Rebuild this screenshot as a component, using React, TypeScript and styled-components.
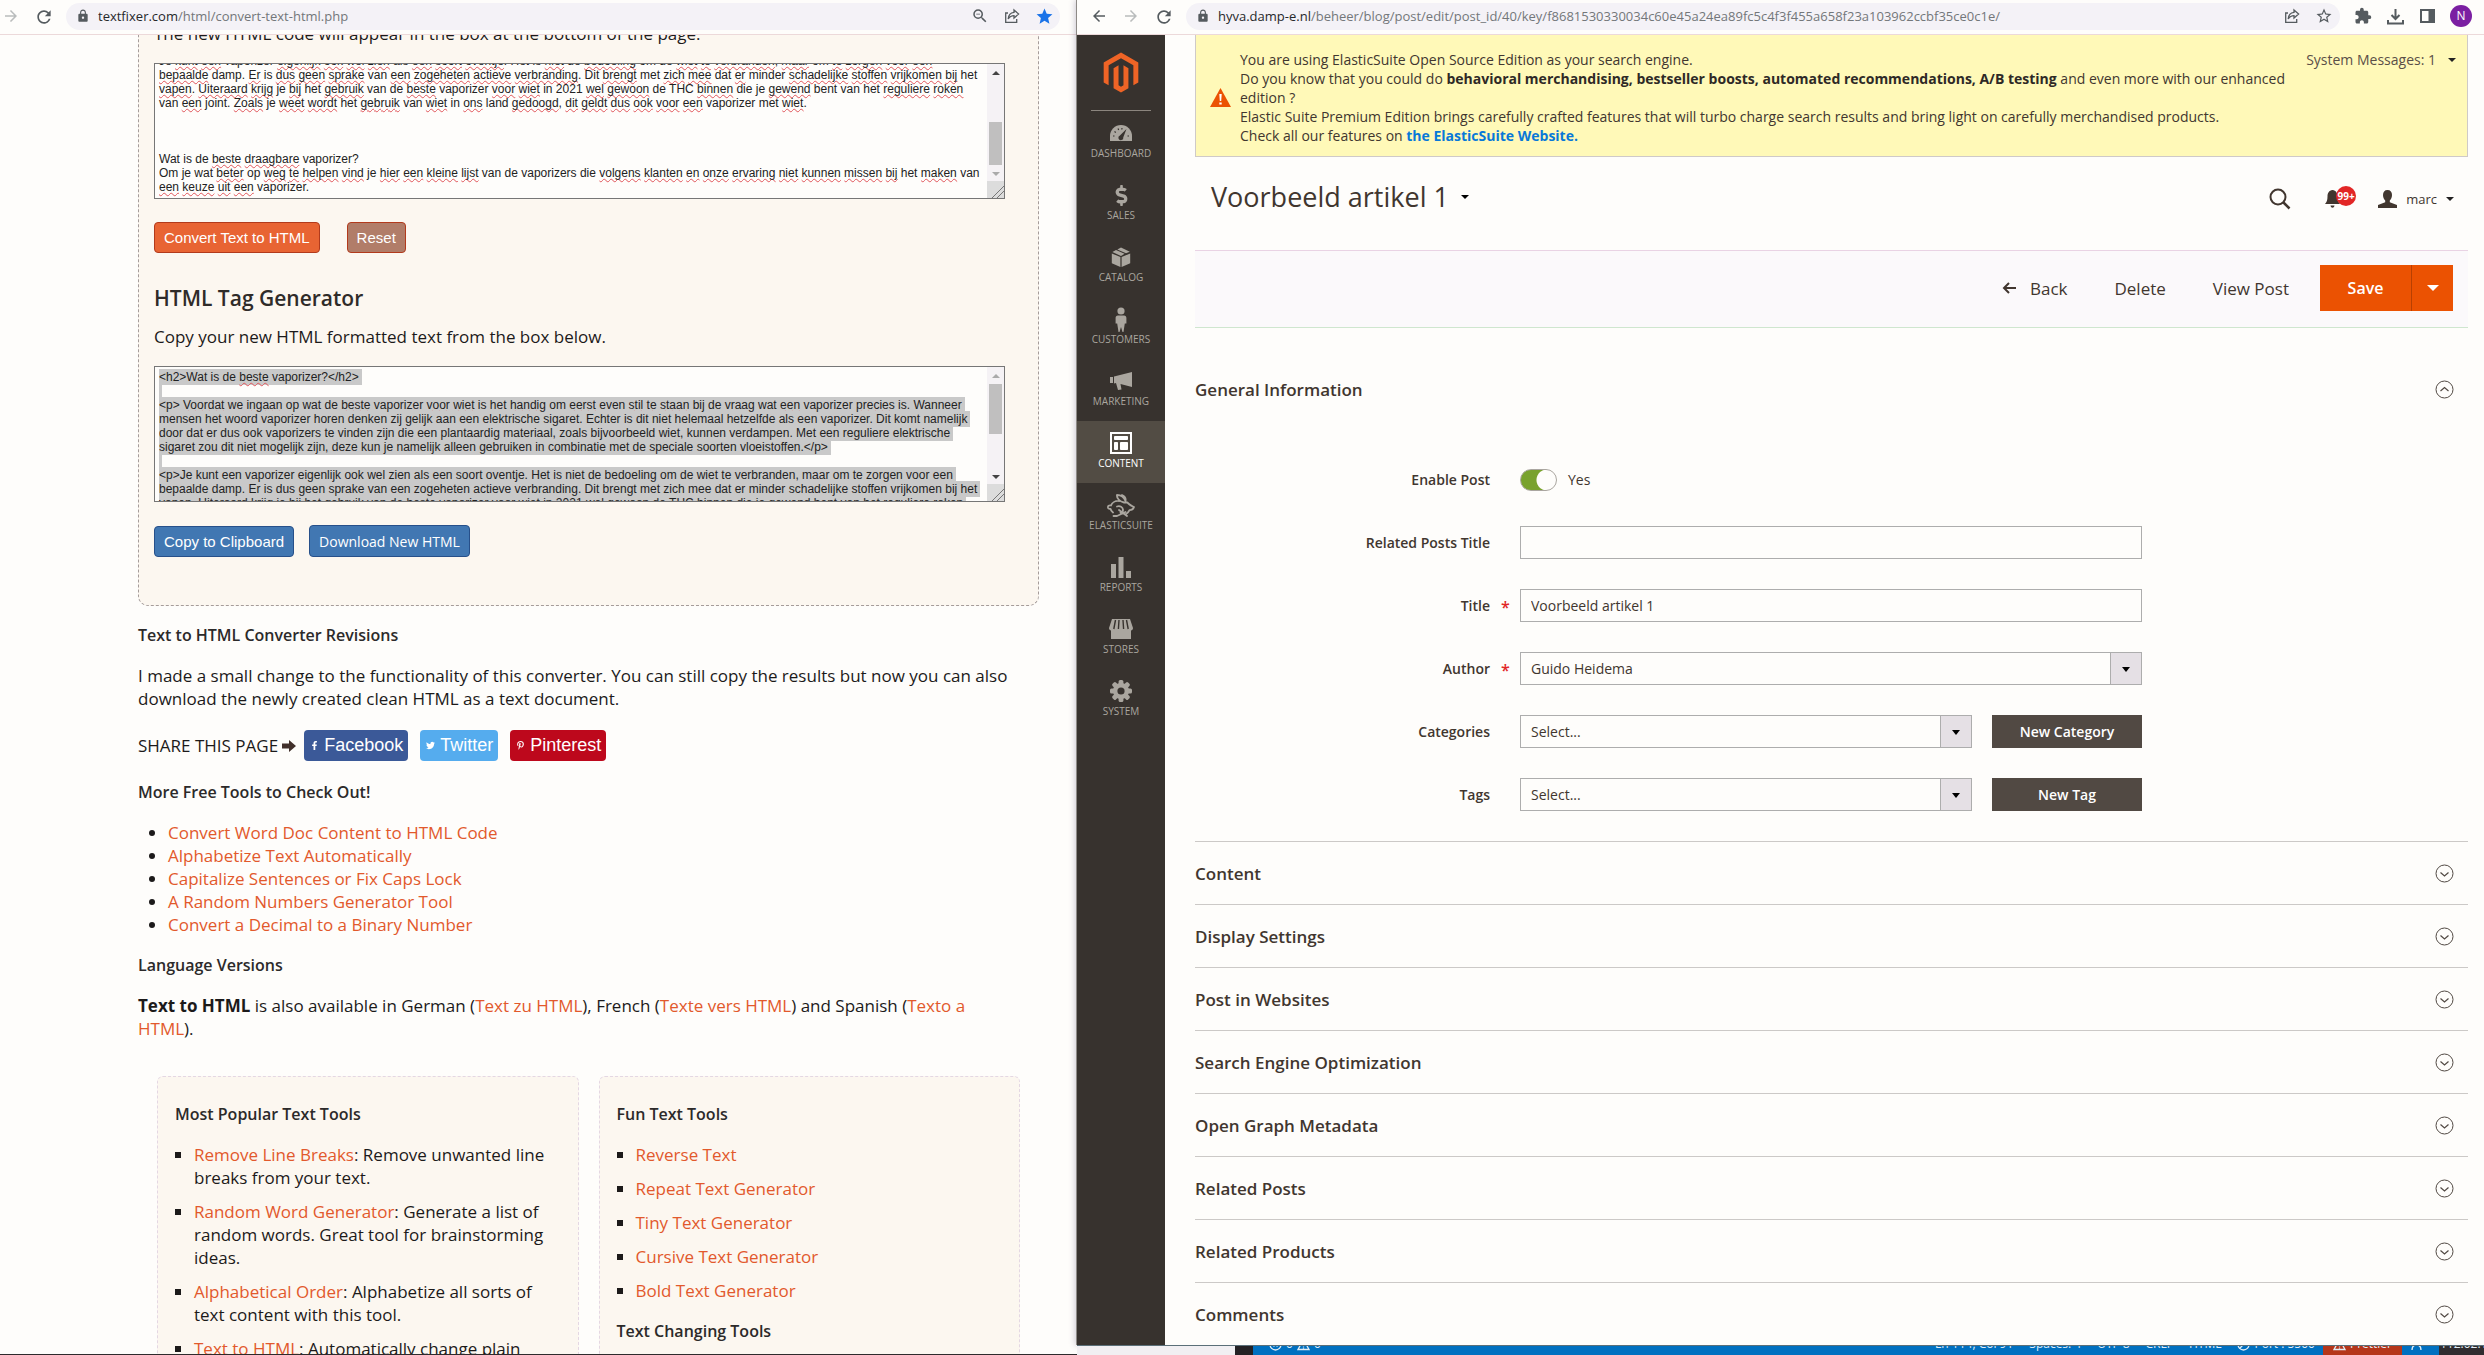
import React, { useLayoutEffect, useRef } from 'react';
import styled, { createGlobalStyle, css } from 'styled-components';
import {
  MdArrowBack, MdArrowForward, MdRefresh, MdLock, MdZoomOut, MdStar, MdStarBorder, MdExtension,
} from 'react-icons/md';
import { FaFacebookF, FaTwitter, FaPinterestP, FaDollarSign } from 'react-icons/fa';
import { Rabbit } from 'lucide-react';

const sans = `'Open Sans', 'Noto Sans', sans-serif`;
const arial = `'Liberation Sans', Arial, sans-serif`;
const paper = '#fefdfb';

const Global = createGlobalStyle`
  *, *::before, *::after { box-sizing: border-box; }
  body { margin: 0; background: ${paper}; font-family: ${sans}; color: #41362f; }
  h1, h2, h3, p, ul { margin: 0; padding: 0; font-weight: 400; }
  button, input, select, textarea { font-family: inherit; margin: 0; border-radius: 0; }
  button { cursor: pointer; }
  svg { display: block; flex: none; }
`;

/* ---------- desktop ---------- */
const Desktop = styled.div`
  display: grid;
  grid-template-columns: 1077fr 1407fr;
  height: 100vh;
  overflow: hidden;
`;
const Window = styled.section`
  display: flex;
  flex-direction: column;
  min-width: 0;
  min-height: 0;
  background: ${paper};
`;
const LeftWindow = styled(Window)`
  border-bottom: 1px solid #2e2a2c;
`;
const RightSide = styled.div`
  display: flex;
  flex-direction: column;
  min-width: 0;
  min-height: 0;
  z-index: 1;
`;
const RightWindow = styled(Window)`
  flex: 1;
  box-shadow: -1px 0 0 #8d8a86, -2px 0 6px rgba(90, 80, 120, 0.3);
`;

/* ---------- browser toolbar ---------- */
const Toolbar = styled.div<{ $start: number; $end: number }>`
  display: flex;
  align-items: center;
  gap: 14px;
  height: 35px;
  flex: none;
  padding: 0 ${p => p.$end}px 2px ${p => p.$start}px;
  border-bottom: 1px solid #ecd9da;
  color: #5c6468;
`;
const IconButton = styled.button<{ $dim?: boolean }>`
  display: grid;
  place-items: center;
  width: 18px;
  height: 18px;
  padding: 0;
  border: 0;
  background: none;
  color: ${p => (p.$dim ? '#b9bcbc' : '#555b5f')};
`;
const Omnibox = styled.div`
  display: flex;
  align-items: center;
  gap: 14px;
  flex: 1;
  min-width: 0;
  height: 27px;
  padding: 0 7px 0 10px;
  border-radius: 14px;
  background: #f4f2f7;
  color: #555b5f;
`;
const Address = styled.div`
  flex: 1;
  margin-left: -6px;
  min-width: 0;
  overflow: hidden;
  white-space: nowrap;
  font-size: 13px;
  line-height: 20px;
  color: #73777a;
  b { font-weight: 400; color: #26282a; }
`;
const Avatar = styled.button`
  width: 22px;
  height: 22px;
  padding: 0;
  border: 0;
  border-radius: 50%;
  background: #7b1fa2;
  color: #fff;
  font-size: 12px;
  line-height: 22px;
`;

/* ---------- text fixer page ---------- */
const Viewport = styled.main`
  flex: 1;
  min-height: 0;
  overflow: hidden;
  padding: 0 38px 0 138px;
  color: #1c1a1a;
  font-size: 17px;
  line-height: 23px;
`;
const ToolBox = styled.div`
  margin-top: -13px;
  padding: 0 33px 48px 15px;
  background: #fcf7f0;
  border: 1px dashed #a59c9a;
  border-top: 0;
  border-radius: 0 0 10px 10px;
`;
const Lead = styled.p`
  line-height: 24px;
`;
const Prose = styled.p`
  padding-right: 20px;
`;
const ToolHeading = styled.h2`
  font-size: 21px;
  line-height: 30px;
  font-weight: 600;
  color: #2f2b29;
  margin: 30px 0 12px;
`;
const Area = styled.div`
  position: relative;
  height: 136px;
  margin: 17px 0 23px;
  border: 1px solid #767676;
  background: ${paper};
  overflow: hidden;
`;
const areaText = css`
  width: 100%;
  height: 100%;
  margin: 0;
  padding: 3px 2px 12px 4px;
  border: 0;
  font-family: ${arial};
  font-size: 12px;
  line-height: 14px;
  white-space: pre;
  overflow: hidden;
`;
const Marks = styled.div`
  ${areaText}
  position: absolute;
  inset: 0;
  color: transparent;
`;
const TextInput = styled.textarea`
  ${areaText}
  position: relative;
  display: block;
  resize: none;
  background: transparent;
  color: #222;
  outline: none;
`;
const Typo = styled.span`
  text-decoration: underline wavy #e0555a;
  text-decoration-thickness: 1px;
  text-decoration-skip-ink: none;
`;
const Selected = styled.span`
  background: #c9c9c9;
  padding: 1px 3px 1px 0;
  line-height: 14px;
`;
const Rail = styled.div`
  position: absolute;
  top: 0;
  right: 0;
  bottom: 0;
  width: 17px;
  display: flex;
  flex-direction: column;
  align-items: center;
  background: #f5f2f5;
`;
const Thumb = styled.div<{ $at: number; $size: number }>`
  width: 13px;
  height: ${p => p.$size}px;
  margin-top: ${p => p.$at}px;
  background: #c0bfbf;
`;
const Tri = styled.i<{ $up?: boolean; $size?: number; $color?: string }>`
  flex: none;
  width: 0;
  height: 0;
  border: ${p => p.$size ?? 4}px solid transparent;
  ${p => (p.$up
    ? css`border-top: 0; border-bottom-color: ${p.$color ?? '#222'};`
    : css`border-bottom: 0; border-top-color: ${p.$color ?? '#222'};`)}
`;
const RailTop = styled.div` height: 17px; display: grid; place-items: center; `;
const RailEnd = styled.div`
  margin-top: auto;
  width: 17px;
  display: grid;
  justify-items: center;
`;
const Grip = styled.div`
  width: 17px;
  height: 17px;
  margin-top: 5px;
  background: linear-gradient(135deg, #dcdcdc 0 62%, #777 62% 66%, #dcdcdc 66% 78%, #777 78% 82%, #dcdcdc 82%);
`;
const ButtonRow = styled.div<{ $gap: number }>`
  display: flex;
  align-items: center;
  gap: ${p => p.$gap}px;
`;
const ToolButton = styled.button<{ $tone: 'orange' | 'brown' | 'blue'; $strong?: boolean }>`
  height: ${p => (p.$strong ? 32 : 31)}px;
  padding: 0 9px;
  border: 1px solid ${p => (p.$tone === 'blue' ? '#27508a' : '#b23a1c')};
  border-radius: 4px;
  background: ${p => ({ orange: '#e86433', brown: '#b17d69', blue: '#4177b2' })[p.$tone]};
  color: #fff;
  font-family: ${p => (p.$strong ? sans : arial)};
  font-size: ${p => (p.$strong ? 14 : 15)}px;
  font-weight: ${p => (p.$strong ? 500 : 400)};
`;
const SmallHeading = styled.h3`
  font-size: 16px;
  line-height: 22px;
  font-weight: 600;
  color: #2c2a2a;
  margin: 18px 0;
`;
const Link = styled.a`
  color: #e2592c;
  text-decoration: none;
`;
const Share = styled.div`
  display: flex;
  align-items: center;
  margin: 20px 0;
  height: 31px;
`;
const ShareButton = styled.a<{ $bg: string }>`
  display: flex;
  align-items: center;
  gap: 5px;
  height: 31px;
  margin-right: 12px;
  padding: 0 5px 0 6px;
  border-radius: 4px;
  background: ${p => p.$bg};
  color: #fff;
  font-family: ${arial};
  font-size: 18px;
  text-decoration: none;
`;
const ShareArrow = styled.svg` margin: 0 8px 0 4px; `;
const BulletList = styled.ul` padding-left: 30px; `;
const Cards = styled.div`
  display: grid;
  grid-template-columns: 1fr 1fr;
  gap: 20px;
  margin: 36px 19px 0;
`;
const Card = styled.div`
  padding: 8px 26px 60px 17px;
  border: 1px dashed #e4d7e3;
  border-radius: 6px;
  background: #fcf7f0;
`;
const SquareList = styled.ul`
  padding-left: 19px;
  list-style: square;
  li + li { margin-top: 11px; }
`;

/* ---------- admin page ---------- */
const Admin = styled.div`
  flex: 1;
  min-height: 0;
  display: flex;
`;
const Sidebar = styled.nav`
  flex: none;
  width: 88px;
  display: flex;
  flex-direction: column;
  align-items: center;
  background: #37322e;
`;
const LogoLink = styled.a`
  display: flex;
  justify-content: center;
  width: 60px;
  height: 76px;
  padding-top: 17px;
  border-bottom: 1px solid #8b857e;
  color: #ef6426;
`;
const MenuItem = styled.a<{ $on?: boolean }>`
  display: flex;
  flex-direction: column;
  align-items: center;
  width: 100%;
  height: 62px;
  padding-top: 10px;
  background: ${p => (p.$on ? '#524c44' : 'transparent')};
  color: ${p => (p.$on ? '#fff' : '#aaa69f')};
  font-size: 10px;
  line-height: 15px;
  text-decoration: none;
  text-transform: uppercase;
`;
const MenuIcon = styled.span`
  display: grid;
  place-items: center;
  height: 24px;
  margin-bottom: 1px;
`;
const Content = styled.main`
  flex: 1;
  min-width: 0;
  overflow: hidden;
  padding: 0 16px 0 30px;
`;
const Notice = styled.div`
  display: flex;
  height: 122px;
  padding: 15px 11px 0 14px;
  background: #fff9b8;
  border: 1px solid #cfcac8;
  border-top: 0;
  font-size: 14px;
  line-height: 19px;
`;
const NoticeText = styled.div`
  flex: 1;
  margin: 0 12px 0 9px;
  b { font-weight: 700; color: #2e2926; }
  a { color: #0878d8; font-weight: 700; text-decoration: none; }
`;
const NoticeIcon = styled.svg` margin-top: 38px; `;
const Messages = styled.button`
  display: flex;
  align-items: center;
  gap: 12px;
  height: 19px;
  padding: 0;
  border: 0;
  background: none;
  color: #5a4f47;
  font-size: 14px;
`;
const PageHead = styled.header`
  display: flex;
  align-items: center;
  height: 93px;
  padding: 0 14px 10px 16px;
`;
const Title = styled.h1`
  display: flex;
  align-items: center;
  gap: 12px;
  flex: 1;
  padding-bottom: 4px;
  font-size: 27px;
  line-height: 38px;
`;
const HeadButton = styled.button<{ $left: number }>`
  position: relative;
  display: flex;
  align-items: center;
  gap: 9px;
  height: 24px;
  margin-left: ${p => p.$left}px;
  padding: 0;
  border: 0;
  background: none;
  color: #41362f;
  font-size: 13px;
`;
const Badge = styled.span`
  position: absolute;
  left: 11px;
  top: -1px;
  width: 20px;
  height: 20px;
  border-radius: 50%;
  background: #e22626;
  color: #fff;
  font-size: 10px;
  font-weight: 700;
  line-height: 20px;
  text-align: center;
`;
const Actions = styled.div`
  display: flex;
  align-items: center;
  justify-content: flex-end;
  height: 78px;
  padding: 0 15px 2px 0;
  background: #fbf9fb;
  border-top: 1px solid #e9d3e4;
  border-bottom: 1px solid #cfe6cf;
`;
const TextButton = styled.button`
  display: flex;
  align-items: center;
  gap: 14px;
  padding: 0;
  margin-right: 47px;
  border: 0;
  background: none;
  color: #41362f;
  font-size: 17px;
  font-weight: 500;
`;
const SaveGroup = styled.div`
  display: flex;
  height: 46px;
  margin-left: -16px;
  background: #eb5202;
`;
const SaveButton = styled.button<{ $w: number }>`
  display: grid;
  place-items: center;
  width: ${p => p.$w}px;
  padding: 0;
  border: 0;
  background: none;
  color: #fff;
  font-size: 16px;
  font-weight: 600;
  & + & { border-left: 1px solid #b84002; }
`;
const Panel = styled.section`
  height: 63px;
  border-top: 1px solid #ccc9c7;
`;
const PanelToggle = styled.button`
  display: flex;
  align-items: center;
  justify-content: space-between;
  width: 100%;
  height: 62px;
  padding: 0 14px 0 0;
  border: 0;
  background: none;
  color: #41362f;
  font-size: 17px;
  font-weight: 600;
`;
const General = styled.section`
  padding-top: 30px;
  height: 513px;
`;
const Form = styled.form`
  display: grid;
  gap: 30px;
  margin-top: 43px;
`;
const Field = styled.div`
  display: grid;
  grid-template-columns: 295px 622px;
  column-gap: 30px;
  align-items: center;
  height: 33px;
  font-size: 14px;
`;
const Label = styled.label<{ $required?: boolean }>`
  position: relative;
  text-align: right;
  font-weight: 600;
  ${p => p.$required && css`
    &::after {
      content: '*';
      position: absolute;
      left: calc(100% + 11px);
      color: #e22626;
      font-size: 16px;
    }
  `}
`;
const Control = styled.div`
  display: flex;
  align-items: center;
  gap: 20px;
`;
const Input = styled.input`
  width: 100%;
  height: 33px;
  padding: 0 10px;
  border: 1px solid #adadad;
  background: ${paper};
  color: #41362f;
  font-size: 14px;
`;
const SelectBox = styled.span`
  position: relative;
  display: block;
  flex: 1;
  &::after {
    content: '';
    position: absolute;
    right: 12px;
    top: 15px;
    border: 4px solid transparent;
    border-top: 5px solid #000;
    border-bottom: 0;
    pointer-events: none;
  }
`;
const Select = styled.select`
  appearance: none;
  display: block;
  width: 100%;
  height: 33px;
  padding: 0 40px 0 10px;
  border: 1px solid #adadad;
  background: linear-gradient(90deg, #adadad 1px, #e5e0e5 1px) right / 31px 100% no-repeat ${paper};
  color: #41362f;
  font-size: 14px;
`;
const DarkButton = styled.button`
  width: 150px;
  height: 33px;
  padding: 0;
  border: 0;
  background: #514943;
  color: #fff;
  font-size: 14px;
  font-weight: 600;
`;
const Switch = styled.input`
  appearance: none;
  width: 37px;
  height: 22px;
  border: 1px solid #aaa6a0;
  border-radius: 11px;
  background: radial-gradient(circle at 26px 10px, ${paper} 10px, #79a22e 11px);
`;
const SwitchText = styled.span` margin-left: -9px; `;

/* ---------- editor status strip ---------- */
const Strip = styled.div`
  display: flex;
  align-items: flex-end;
  flex: none;
  height: 10px;
  overflow: hidden;
  border-top: 1px solid #5b6f78;
  background: #f1eff2;
`;
const StripPage = styled.div`
  flex: none;
  width: 176px;
  height: 22px;
  display: flex;
  align-items: center;
  justify-content: flex-end;
  padding-right: 8px;
  border-right: 18px solid #242124;
`;
const StatusBar = styled.div`
  flex: 1;
  min-width: 0;
  display: flex;
  align-items: center;
  gap: 16px;
  height: 22px;
  padding-left: 16px;
  background: #0070c0;
  color: #e2edf6;
  font-size: 12px;
  line-height: 22px;
  white-space: nowrap;
`;
const StatusItem = styled.span`
  display: flex;
  align-items: center;
  gap: 4px;
`;
const Spacer = styled.span` flex: 1; `;
const Prettier = styled(StatusItem)`
  padding: 0 10px;
  margin: 0 -8px;
  background: #b5361a;
`;
const Clock = styled.span`
  width: 45px;
  padding-left: 1px;
  overflow: hidden;
  background: #302d30;
`;

const sourceLines = [
  '<p>', '', '',
  'Je _kunt_ _een_ vaporizer _eigenlijk_ _ook_ _wel_ _zien_ als _een_ _soort_ _oventje_. Het is _niet_ de _bedoeling_ om de _wiet_ _te_ _verbranden_, _maar_ om _te_ _zorgen_ _voor_ _een_',
  '_bepaalde_ damp. _Er_ is _dus_ _geen_ _sprake_ van _een_ _zogeheten_ _actieve_ _verbranding_. Dit _brengt_ met _zich_ _mee_ dat _er_ minder _schadelijke_ _stoffen_ _vrijkomen_ _bij_ het',
  '_vapen_. _Uiteraard_ _krijg_ je _bij_ het _gebruik_ van de _beste_ vaporizer _voor_ _wiet_ in 2021 _wel_ _gewoon_ de THC _binnen_ die je _gewend_ bent van het _reguliere_ _roken_',
  'van _een_ joint. _Zoals_ je _weet_ _wordt_ het _gebruik_ van _wiet_ in _ons_ land _gedoogd_, _dit_ _geldt_ _dus_ _ook_ _voor_ _een_ vaporizer met _wiet_.',
  '', '', '',
  'Wat is de _beste_ _draagbare_ vaporizer?',
  'Om je wat _beter_ op _weg_ _te_ _helpen_ _vind_ je _hier_ _een_ _kleine_ _lijst_ van de vaporizers die _volgens_ _klanten_ _en_ _onze_ _ervaring_ _niet_ _kunnen_ _missen_ _bij_ het _maken_ van',
  '_een_ _keuze_ _uit_ _een_ vaporizer.',
];
const htmlLines = [
  '<h2>Wat is de _beste_ vaporizer?</h2>', '',
  '<p> _Voordat_ we _ingaan_ op wat de _beste_ vaporizer _voor_ _wiet_ is het _handig_ om _eerst_ even _stil_ _te_ _staan_ bij de vraag wat _een_ vaporizer _precies_ is. Wanneer',
  'mensen het woord vaporizer horen denken zij gelijk aan een elektrische sigaret. Echter is dit niet helemaal hetzelfde als een vaporizer. Dit komt namelijk',
  'door dat er dus ook vaporizers te vinden zijn die een plantaardig materiaal, zoals bijvoorbeeld wiet, kunnen verdampen. Met een reguliere elektrische',
  'sigaret zou dit niet mogelijk zijn, deze kun je namelijk alleen gebruiken in combinatie met de speciale soorten vloeistoffen.</p>',
  '',
  '<p>Je kunt een vaporizer eigenlijk ook wel zien als een soort oventje. Het is niet de bedoeling om de wiet te verbranden, maar om te zorgen voor een',
  'bepaalde damp. Er is dus geen sprake van een zogeheten actieve verbranding. Dit brengt met zich mee dat er minder schadelijke stoffen vrijkomen bij het',
  'vapen. Uiteraard krijg je bij het gebruik van de beste vaporizer voor wiet in 2021 wel gewoon de THC binnen die je gewend bent van het reguliere roken',
];

type AreaProps = {
  label: string; lines: string[]; selected?: boolean; scrollTo?: number;
  thumbAt: number; thumbSize: number;
};
function SpellcheckedArea({ label, lines, selected, scrollTo = 0, thumbAt, thumbSize }: AreaProps) {
  const input = useRef<HTMLTextAreaElement>(null);
  const marks = useRef<HTMLDivElement>(null);
  useLayoutEffect(() => {
    if (input.current) input.current.scrollTop = scrollTo;
    if (marks.current) marks.current.scrollTop = scrollTo;
  }, [scrollTo]);
  return (
    <Area>
      <Marks ref={marks} aria-hidden="true">
        {lines.map((line, i) => {
          const parts = line.split('_').map((part, j) => (j % 2 ? <Typo key={j}>{part}</Typo> : part));
          return (
            <React.Fragment key={i}>
              {selected ? <Selected>{parts}</Selected> : parts}
              {'\n'}
            </React.Fragment>
          );
        })}
      </Marks>
      <TextInput ref={input} aria-label={label} spellCheck={false} readOnly
        value={lines.join('\n').replace(/_/g, '')} />
      <Rail>
        <RailTop><Tri $up $color={scrollTo ? '#444' : '#aaa'} /></RailTop>
        <Thumb $at={thumbAt} $size={thumbSize} />
        <RailEnd><Tri $color={scrollTo ? '#aaa' : '#444'} /><Grip /></RailEnd>
      </Rail>
    </Area>
  );
}

const ShareIcon = () => (
  <svg width="16" height="16" viewBox="0 0 16 16" fill="none" stroke="currentColor" strokeWidth="1.3">
    <path d="M4 5H1.700v9.300h11V11M10 2l4.600 4-4.600 4V7.600C7 7.600 5.400 9 4.200 11c.2-3.700 2.300-6.300 5.800-6.700z" />
  </svg>
);
const DownloadIcon = () => (
  <svg width="17" height="17" viewBox="0 0 17 17" fill="none" stroke="currentColor" strokeWidth="2">
    <path d="M8.500 1v9.500M4.500 7l4 4 4-4M1 12v3.500h15V12" />
  </svg>
);
const PanelIcon = () => (
  <svg width="15" height="14" viewBox="0 0 15 14" fill="currentColor">
    <path fillRule="evenodd" d="M0 0h15v14H0zM2 2v10h6.500V2z" />
  </svg>
);
const Gear = () => (
  <svg width="24" height="24" viewBox="0 0 24 24" fill="currentColor">
    {[0, 45, 90, 135].map(a => (
      <rect key={a} x="9.600" y="1" width="4.800" height="22" rx="1.500" transform={`rotate(${a} 12 12)`} />
    ))}
    <circle cx="12" cy="12" r="8" />
    <circle cx="12" cy="12" r="3.600" fill="#37322e" />
  </svg>
);
const Chevron = ({ up }: { up?: boolean }) => (
  <svg width="19" height="19" viewBox="0 0 19 19" fill="none" stroke="#514943">
    <circle cx="9.500" cy="9.500" r="8.500" />
    <path d={up ? 'M5.500 11l4-3.500 4 3.500' : 'M5.500 8.500l4 3.500 4-3.500'} strokeWidth="1.200" />
  </svg>
);
const StatusIcon = ({ d, round }: { d: string; round?: boolean }) => (
  <svg width="13" height="13" viewBox="0 0 13 13" fill="none" stroke="currentColor" strokeWidth="1.300">
    {round && <circle cx="6.500" cy="6.500" r="5.500" />}
    <path d={d} />
  </svg>
);
const warnPath = 'M6.500 1.500l5.500 10H1zM6.500 5v3.500M6.500 9.500v1';

const menu: { name: string; icon: React.ReactNode; on?: boolean }[] = [
  { name: 'Dashboard', icon: (
    <svg width="22" height="16" viewBox="0 0 22 16"><path d="M0 16v-5a11 11 0 0 1 22 0v5z" fill="currentColor" />
      <path d="M3 11h1.500M4.500 6.500l1.300.9M8 3.500l.7 1.400M12 3l-.2 1.500M19 11h-1.500" stroke="#37322e" strokeWidth="1.200" />
      <path d="M16.500 4l-3.200 8.200a2.500 2.500 0 1 1-3.400-1.800z" fill="#37322e" /></svg>
  ) },
  { name: 'Sales', icon: <FaDollarSign size={21} /> },
  { name: 'Catalog', icon: (
    <svg width="20" height="20" viewBox="0 0 20 20" fill="currentColor">
      <path d="M9.400 20L.8 16.200V6.400l8.600 3.700zM10.600 20l8.600-3.800V6.400l-8.600 3.700zM1.400 5L5 3l8.600 3.800L10 9zM6.300 2.400L10 .4l8.800 4.300-3.800 1.500z" /></svg>
  ) },
  { name: 'Customers', icon: (
    <svg width="12" height="25" viewBox="0 0 12 25" fill="currentColor">
      <circle cx="6" cy="4" r="3.600" />
      <path d="M3 8.500h6c1.600 0 2.400 1 2.400 2.500v5.500h-1.600L8.500 25h-1L6 20l-1.500 5h-1L2.200 16.500H.6V11c0-1.500.8-2.500 2.400-2.500z" /></svg>
  ) },
  { name: 'Marketing', icon: (
    <svg width="22" height="18" viewBox="0 0 22 18" fill="currentColor">
      <path d="M0 5h3v6H0zM4 4.600L22 0v15L10.500 12l1 5.500-3.500.5-2-7-2 .4z" /></svg>
  ) },
  { name: 'Content', on: true, icon: (
    <svg width="22" height="22" viewBox="0 0 22 22" fill="none" stroke="#fff" strokeWidth="2">
      <path d="M1 1h20v20H1z" /><path d="M4.500 4.500h13v3h-13zM4.500 10.500h3v7h-3zM10.500 10.500h7v7h-7z" fill="#fff" strokeWidth="1" /></svg>
  ) },
  { name: 'Elasticsuite', icon: (
    <svg width="28" height="23" viewBox="0 0 28 23" fill="none" stroke="currentColor" strokeWidth="1.800" strokeLinejoin="round" strokeLinecap="round">
      <path d="M17 8.500C12.500 7.500 9.500 4 10 1c4 0 7 2 8.500 6C19 4.500 17.500 2 15 1M17 8.500h3.500c1 2 3.500 3 6.500 4.500-.5 2-2 3-4.500 3.200-1 2.300-2.500 3.300-4 4.300M12.500 7c-4-.5-7.500 1.500-8.500 4.500-2-.5-3.300.5-3 2 .3 1.300 1.500 1.600 2.500 1.300.3 1.500 1 2.700 2.500 3.700M10 12.500c3-1 6 .5 6 3.500 0 1.500-1 2.500-2.500 2.500M12 16l8 6M18.500 18l-8.500 4H6.500" />
    </svg>
  ) },
  { name: 'Reports', icon: (
    <svg width="20" height="21" viewBox="0 0 20 21" fill="currentColor"><path d="M0 7h5v14H0zM7.500 0h5v21h-5zM15 14h5v7h-5z" /></svg>
  ) },
  { name: 'Stores', icon: (
    <svg width="24" height="20" viewBox="0 0 24 20"><path d="M3 0h18l3 9c0 1.500-1 2.500-2 2.500V20H2v-8.500C1 11.500 0 10.500 0 9z" fill="currentColor" />
      <path d="M6.500 1L4.800 10M10 1l-.6 9M14 1l.6 9M17.500 1l1.700 9" stroke="#37322e" strokeWidth="1.400" /></svg>
  ) },
  { name: 'System', icon: <Gear /> },
];

const panels = ['Content', 'Display Settings', 'Post in Websites', 'Search Engine Optimization',
  'Open Graph Metadata', 'Related Posts', 'Related Products', 'Comments'];
const freeTools = ['Convert Word Doc Content to HTML Code', 'Alphabetize Text Automatically',
  'Capitalize Sentences or Fix Caps Lock', 'A Random Numbers Generator Tool', 'Convert a Decimal to a Binary Number'];
const popular = [
  ['Remove Line Breaks', 'Remove unwanted line breaks from your text.'],
  ['Random Word Generator', 'Generate a list of random words. Great tool for brainstorming ideas.'],
  ['Alphabetical Order', 'Alphabetize all sorts of text content with this tool.'],
  ['Text to HTML', 'Automatically change plain text into HTML.'],
];
const fun = ['Reverse Text', 'Repeat Text Generator', 'Tiny Text Generator', 'Cursive Text Generator', 'Bold Text Generator'];

function TextFixer() {
  return (
    <LeftWindow>
      <Toolbar $start={2} $end={17}>
        <IconButton aria-label="Forward" $dim><MdArrowForward size={18} /></IconButton>
        <IconButton aria-label="Reload"><MdRefresh size={20} /></IconButton>
        <Omnibox>
          <MdLock size={14} />
          <Address><b>textfixer.com</b>/html/convert-text-html.php</Address>
          <IconButton aria-label="Zoom"><MdZoomOut size={18} /></IconButton>
          <IconButton aria-label="Share"><ShareIcon /></IconButton>
          <IconButton aria-label="Bookmark"><MdStar size={19} color="#1a73e8" /></IconButton>
        </Omnibox>
      </Toolbar>
      <Viewport>
        <ToolBox>
          <Lead>The new HTML code will appear in the box at the bottom of the page.</Lead>
          <SpellcheckedArea label="Text to convert" lines={sourceLines} scrollTo={55} thumbAt={41} thumbSize={43} />
          <ButtonRow $gap={27}>
            <ToolButton $tone="orange">Convert Text to HTML</ToolButton>
            <ToolButton $tone="brown">Reset</ToolButton>
          </ButtonRow>
          <ToolHeading>HTML Tag Generator</ToolHeading>
          <Lead>Copy your new HTML formatted text from the box below.</Lead>
          <SpellcheckedArea label="HTML output" lines={htmlLines} selected thumbAt={0} thumbSize={50} />
          <ButtonRow $gap={15}>
            <ToolButton $tone="blue">Copy to Clipboard</ToolButton>
            <ToolButton $tone="blue" $strong>Download New HTML</ToolButton>
          </ButtonRow>
        </ToolBox>
        <SmallHeading>Text to HTML Converter Revisions</SmallHeading>
        <Prose>I made a small change to the functionality of this converter. You can still copy the results but now you can also download the newly created clean HTML as a text document.</Prose>
        <Share>
          SHARE THIS PAGE
          <ShareArrow width="14" height="12" viewBox="0 0 14 12" fill="#41302b"><path d="M0 3.500h7V0l7 6-7 6V8.500H0z" /></ShareArrow>
          <ShareButton href="#facebook" $bg="#3b5998"><FaFacebookF size={9} />Facebook</ShareButton>
          <ShareButton href="#twitter" $bg="#55acee"><FaTwitter size={9} />Twitter</ShareButton>
          <ShareButton href="#pinterest" $bg="#bd081c"><FaPinterestP size={9} />Pinterest</ShareButton>
        </Share>
        <SmallHeading>More Free Tools to Check Out!</SmallHeading>
        <BulletList>
          {freeTools.map(t => <li key={t}><Link href="#tool">{t}</Link></li>)}
        </BulletList>
        <SmallHeading>Language Versions</SmallHeading>
        <Prose>
          <b>Text to HTML</b> is also available in German (<Link href="#de">Text zu HTML</Link>), French (<Link href="#fr">Texte vers HTML</Link>) and Spanish (<Link href="#es">Texto a HTML</Link>).
        </Prose>
        <Cards>
          <Card>
            <SmallHeading>Most Popular Text Tools</SmallHeading>
            <SquareList>
              {popular.map(([name, text]) => <li key={name}><Link href="#tool">{name}</Link>: {text}</li>)}
            </SquareList>
          </Card>
          <Card>
            <SmallHeading>Fun Text Tools</SmallHeading>
            <SquareList>
              {fun.map(t => <li key={t}><Link href="#tool">{t}</Link></li>)}
            </SquareList>
            <SmallHeading>Text Changing Tools</SmallHeading>
          </Card>
        </Cards>
      </Viewport>
    </LeftWindow>
  );
}

function MagentoAdmin() {
  return (
    <RightWindow>
      <Toolbar $start={13} $end={12}>
        <IconButton aria-label="Back"><MdArrowBack size={18} /></IconButton>
        <IconButton aria-label="Forward" $dim><MdArrowForward size={18} /></IconButton>
        <IconButton aria-label="Reload"><MdRefresh size={20} /></IconButton>
        <Omnibox>
          <MdLock size={14} />
          <Address><b>hyva.damp-e.nl</b>/beheer/blog/post/edit/post_id/40/key/f8681530330034c60e45a24ea89fc5c4f3f455a658f23a103962ccbf35ce0c1e/</Address>
          <IconButton aria-label="Share"><ShareIcon /></IconButton>
          <IconButton aria-label="Bookmark"><MdStarBorder size={18} /></IconButton>
        </Omnibox>
        <IconButton aria-label="Extensions"><MdExtension size={18} /></IconButton>
        <IconButton aria-label="Downloads"><DownloadIcon /></IconButton>
        <IconButton aria-label="Side panel"><PanelIcon /></IconButton>
        <Avatar aria-label="Profile">N</Avatar>
      </Toolbar>
      <Admin>
        <Sidebar>
          <LogoLink href="#home" aria-label="Magento">
            <svg width="40" height="41" viewBox="0 0 24 24" fill="currentColor">
              <path d="M12 24l-4.455-2.572v-12l2.970-1.715v12.001l1.485.902 1.485-.902V7.713l2.971 1.715v12L12 24zM22.391 6v12l-2.969 1.714V7.713L12 3.430 4.574 7.713v12.001L1.609 18V6L12 0l10.391 6z" />
            </svg>
          </LogoLink>
          {menu.map(m => (
            <MenuItem key={m.name} href={'#' + m.name} $on={m.on}>
              <MenuIcon>{m.icon}</MenuIcon>
              {m.name}
            </MenuItem>
          ))}
        </Sidebar>
        <Content>
          <Notice>
            <NoticeIcon width="21" height="19" viewBox="0 0 21 19">
              <path d="M10.500 0L21 19H0z" fill="#eb5202" /><path d="M9.300 6h2.400l-.5 7H9.800zM9.300 14.500h2.400v2H9.300z" fill="#fff" />
            </NoticeIcon>
            <NoticeText>
              You are using ElasticSuite Open Source Edition as your search engine.<br />
              Do you know that you could do <b>behavioral merchandising, bestseller boosts, automated recommendations, A/B testing</b> and even more with our enhanced edition ?<br />
              Elastic Suite Premium Edition brings carefully crafted features that will turbo charge search results and bring light on carefully merchandised products.<br />
              Check all our features on <a href="#elasticsuite">the ElasticSuite Website.</a>
            </NoticeText>
            <Messages>System Messages: 1 <Tri /></Messages>
          </Notice>
          <PageHead>
            <Title>Voorbeeld artikel 1 <Tri $color="#000" /></Title>
            <HeadButton $left={0} aria-label="Search">
              <svg width="22" height="22" viewBox="0 0 22 22" fill="none" stroke="currentColor" strokeWidth="2">
                <circle cx="9" cy="9" r="7.500" /><path d="M14.500 14.500l6 6" strokeWidth="2.500" />
              </svg>
            </HeadButton>
            <HeadButton $left={34} aria-label="Notifications">
              <svg width="15" height="18" viewBox="0 0 15 18" fill="currentColor">
                <path d="M7.500 0c3.500.5 5 3 5 6.500 0 4 .8 5.500 2.500 7.500H0c1.700-2 2.500-3.500 2.500-7.500C2.500 3 4 .5 7.500 0zM5.500 15.500h4c-.5 3-3.500 3-4 0z" />
              </svg>
              <Badge>99+</Badge>
            </HeadButton>
            <HeadButton $left={38}>
              <svg width="19" height="18" viewBox="0 0 19 18" fill="currentColor">
                <path d="M9.500 0C12.500 0 14 2 14 5c0 2.500-1 4.500-2.200 5.500v1.800L19 15v3H0v-3l7.200-2.700v-1.800C6 9.500 5 7.500 5 5c0-3 1.500-5 4.500-5z" />
              </svg>
              marc <Tri />
            </HeadButton>
          </PageHead>
          <Actions>
            <TextButton>
              <svg width="14" height="12" viewBox="0 0 14 12" fill="none" stroke="currentColor" strokeWidth="2"><path d="M14 6H1.500M7 1L2 6l5 5" /></svg>
              Back
            </TextButton>
            <TextButton>Delete</TextButton>
            <TextButton>View Post</TextButton>
            <SaveGroup>
              <SaveButton $w={91}>Save</SaveButton>
              <SaveButton $w={42} aria-label="More save options"><Tri $size={6} $color="#fff" /></SaveButton>
            </SaveGroup>
          </Actions>
          <General>
            <PanelToggle>General Information <Chevron up /></PanelToggle>
            <Form onSubmit={e => e.preventDefault()}>
              <Field>
                <Label htmlFor="enable">Enable Post</Label>
                <Control><Switch id="enable" type="checkbox" role="switch" defaultChecked /><SwitchText>Yes</SwitchText></Control>
              </Field>
              <Field>
                <Label htmlFor="related">Related Posts Title</Label>
                <Control><Input id="related" /></Control>
              </Field>
              <Field>
                <Label htmlFor="title" $required>Title</Label>
                <Control><Input id="title" defaultValue="Voorbeeld artikel 1" /></Control>
              </Field>
              <Field>
                <Label htmlFor="author" $required>Author</Label>
                <Control><SelectBox><Select id="author"><option>Guido Heidema</option></Select></SelectBox></Control>
              </Field>
              <Field>
                <Label htmlFor="categories">Categories</Label>
                <Control>
                  <SelectBox><Select id="categories"><option>Select...</option></Select></SelectBox>
                  <DarkButton type="button">New Category</DarkButton>
                </Control>
              </Field>
              <Field>
                <Label htmlFor="tags">Tags</Label>
                <Control>
                  <SelectBox><Select id="tags"><option>Select...</option></Select></SelectBox>
                  <DarkButton type="button">New Tag</DarkButton>
                </Control>
              </Field>
            </Form>
          </General>
          {panels.map(name => (
            <Panel key={name}><PanelToggle>{name} <Chevron /></PanelToggle></Panel>
          ))}
        </Content>
      </Admin>
    </RightWindow>
  );
}

export default function App() {
  return (
    <>
      <Global />
      <Desktop>
        <TextFixer />
        <RightSide>
          <MagentoAdmin />
          <Strip>
            <StripPage><Tri $color="#555" /></StripPage>
            <StatusBar>
              <StatusItem><StatusIcon round d="M4.500 4.500l4 4M8.500 4.500l-4 4" />0 <StatusIcon d={warnPath} />0</StatusItem>
              <Spacer />
              <span>Ln 114, Col 91</span>
              <span>Spaces: 4</span>
              <span>UTF-8</span>
              <span>CRLF</span>
              <span>HTML</span>
              <StatusItem><StatusIcon round d="M2.500 10.500l8-8" />Port : 5500</StatusItem>
              <Prettier><StatusIcon d={warnPath} />Prettier</Prettier>
              <StatusIcon d="M2 12c0-3 1.500-5 4.500-5s4.500 2 4.500 5M4.500 4a2 2 0 1 0 4 0 2 2 0 1 0-4 0" />
              <Clock>112:02:1</Clock>
            </StatusBar>
          </Strip>
        </RightSide>
      </Desktop>
    </>
  );
}
